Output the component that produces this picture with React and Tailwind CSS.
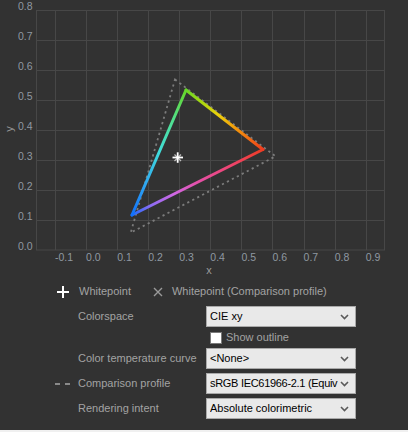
import React from "react";

const FONT = { fontFamily: '"Liberation Sans", Arial, sans-serif' };

const gridX = Array.from({ length: 11 }, (_, i) => 55 + i * 31.07);
const gridY = [10, 40, 70, 100, 130, 160, 190, 220, 250];
const xLabels = ["-0.1", "0.0", "0.1", "0.2", "0.3", "0.4", "0.5", "0.6", "0.7", "0.8", "0.9"];
const yLabels = ["0.8", "0.7", "0.6", "0.5", "0.4", "0.3", "0.2", "0.1", "0.0"];

const G = [186, 90];
const R = [263, 149.5];
const B = [132, 215];
const cmp = [
  [175, 79.5],
  [275.5, 156.3],
  [130.7, 232.7],
];

function Chart() {
  return (
    <svg width="408" height="280" className="block" style={FONT}>
      <defs>
        <linearGradient id="gr" gradientUnits="userSpaceOnUse" x1={G[0]} y1={G[1]} x2={R[0]} y2={R[1]}>
          <stop offset="0" stopColor="#66d628" />
          <stop offset="0.2" stopColor="#a8d810" />
          <stop offset="0.42" stopColor="#ecd00c" />
          <stop offset="0.68" stopColor="#f2900c" />
          <stop offset="1" stopColor="#ee3c1c" />
        </linearGradient>
        <linearGradient id="rb" gradientUnits="userSpaceOnUse" x1={R[0]} y1={R[1]} x2={B[0]} y2={B[1]}>
          <stop offset="0" stopColor="#ee3c22" />
          <stop offset="0.25" stopColor="#ee4470" />
          <stop offset="0.5" stopColor="#e450a8" />
          <stop offset="0.68" stopColor="#d068e4" />
          <stop offset="0.86" stopColor="#8a6cf4" />
          <stop offset="1" stopColor="#1a6cfa" />
        </linearGradient>
        <linearGradient id="bg" gradientUnits="userSpaceOnUse" x1={B[0]} y1={B[1]} x2={G[0]} y2={G[1]}>
          <stop offset="0" stopColor="#1070fa" />
          <stop offset="0.25" stopColor="#30a8f0" />
          <stop offset="0.5" stopColor="#40dcdc" />
          <stop offset="0.75" stopColor="#50e090" />
          <stop offset="1" stopColor="#66d628" />
        </linearGradient>
      </defs>

      <rect x="36.5" y="10.5" width="348" height="239.5" fill="none" stroke="#474747" />
      {gridY.slice(1, -1).map((y) => (
        <line key={y} x1="36.5" x2="384.5" y1={y + 0.5} y2={y + 0.5} stroke="#474747" />
      ))}
      {gridX.map((x) => (
        <line key={x} x1={Math.round(x) + 0.5} x2={Math.round(x) + 0.5} y1="10.5" y2="250" stroke="#474747" />
      ))}

      {yLabels.map((t, i) => (
        <text key={t} x="32.5" y={gridY[i] - 3} textAnchor="end" dominantBaseline="middle" fontSize="10.5" fill="#8f98a1">
          {t}
        </text>
      ))}
      {xLabels.map((t, i) => (
        <text key={t} x={gridX[i]} y="258" dominantBaseline="middle" fontSize="10.5" fill="#8f98a1">
          {t}
        </text>
      ))}
      <text x="10" y="129" transform="rotate(-90 10 129)" textAnchor="middle" dominantBaseline="middle" fontSize="11" fill="#9a9a9a">
        y
      </text>
      <text x="209" y="271.5" textAnchor="middle" dominantBaseline="middle" fontSize="11" fill="#9a9a9a">
        x
      </text>

      <polygon
        points={cmp.map((p) => p.join(",")).join(" ")}
        fill="none"
        stroke="#7c7c7c"
        strokeWidth="1.8"
        strokeDasharray="2.2 3.4"
      />

      <line x1={G[0]} y1={G[1]} x2={R[0]} y2={R[1]} stroke="url(#gr)" strokeWidth="3" strokeLinecap="round" />
      <line x1={R[0]} y1={R[1]} x2={B[0]} y2={B[1]} stroke="url(#rb)" strokeWidth="3" strokeLinecap="round" />
      <line x1={B[0]} y1={B[1]} x2={G[0]} y2={G[1]} stroke="url(#bg)" strokeWidth="3" strokeLinecap="round" />

      <g stroke="#bdbdbd" strokeWidth="1.2">
        <line x1="174.5" y1="154.5" x2="181" y2="161" />
        <line x1="181" y1="154.5" x2="174.5" y2="161" />
      </g>
      <g stroke="#ffffff" strokeWidth="1.8">
        <line x1="172.5" y1="157.5" x2="183" y2="157.5" />
        <line x1="177.7" y1="152.3" x2="177.7" y2="162.8" />
      </g>
    </svg>
  );
}

function Chevron() {
  return (
    <svg width="9" height="6" viewBox="0 0 9 6" className="shrink-0">
      <path d="M1 1 L4.5 4.5 L8 1" fill="none" stroke="#5a5a5a" strokeWidth="1.6" />
    </svg>
  );
}

function Select({ value, tight }) {
  return (
    <div className="flex h-[21px] w-[150px] items-center border border-[#a9a9a9] bg-[#e9e9e9] pl-[3px] pr-[6px]">
      <span className={`flex-1 overflow-hidden whitespace-nowrap text-[11px] text-black ${tight ? "tracking-[-0.3px]" : ""}`}>
        {value}
      </span>
      <span className="ml-[2px]">
        <Chevron />
      </span>
    </div>
  );
}

function Row({ label, value, icon, tight }) {
  return (
    <div className="flex h-[21px] items-center">
      <div className="flex w-[78px] items-center pl-[55px]">{icon}</div>
      <div className="w-[128px] text-[11px] text-[#a3a3a3]">{label}</div>
      <Select value={value} tight={tight} />
    </div>
  );
}

const DashIcon = (
  <div className="flex gap-[5px]">
    <span className="h-[2px] w-[5px] bg-[#8a8a8a]" />
    <span className="h-[2px] w-[5px] bg-[#8a8a8a]" />
  </div>
);

export default function App() {
  return (
    <div style={FONT} className="w-[408px] bg-[#323232]">
      <div className="h-[430px]">
        <Chart />
        <div className="flex h-[23px] items-center text-[11px] text-[#a3a3a3]">
          <svg width="12" height="12" className="ml-[57px]">
            <path d="M0 6 H12 M6 0 V12" stroke="#ffffff" strokeWidth="2" />
          </svg>
          <span className="ml-[10px]">Whitepoint</span>
          <svg width="10" height="10" className="ml-[22px]">
            <path d="M1 1 L9 9 M9 1 L1 9" stroke="#9a9a9a" strokeWidth="1.4" />
          </svg>
          <span className="ml-[9px]">Whitepoint (Comparison profile)</span>
        </div>
        <div className="mt-[3px] flex flex-col">
          <Row label="Colorspace" value="CIE xy" />
          <div className="flex h-[21px] items-center pl-[210px]">
            <span className="h-[12px] w-[12px] border border-[#7a7a7a] bg-white" />
            <span className="ml-[4px] text-[11px] text-[#a3a3a3]">Show outline</span>
          </div>
          <div className="flex flex-col gap-[4px]">
            <Row label="Color temperature curve" value="<None>" />
            <Row label="Comparison profile" value="sRGB IEC61966-2.1 (Equiv" icon={DashIcon} tight />
            <Row label="Rendering intent" value="Absolute colorimetric" />
          </div>
        </div>
      </div>
      <div className="h-[2px] bg-[#f0f0f0]" />
    </div>
  );
}
